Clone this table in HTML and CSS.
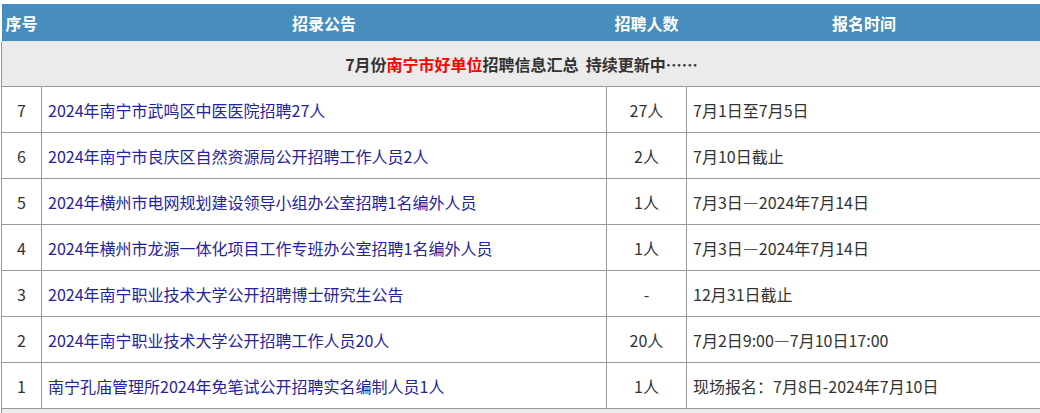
FILE: index.html
```html
<!DOCTYPE html>
<html lang="zh-CN">
<head>
<meta charset="utf-8">
<title>招聘信息汇总</title>
<link rel="stylesheet" href="styles.css">
</head>
<body>
<table class="jobs">
  <colgroup>
    <col class="c-no">
    <col class="c-title">
    <col class="c-count">
    <col class="c-time">
  </colgroup>
  <thead>
    <tr class="head">
      <th>序号</th>
      <th>招录公告</th>
      <th>招聘人数</th>
      <th>报名时间</th>
    </tr>
  </thead>
  <tbody>
    <tr class="group">
      <td colspan="4">7月份<span class="red">南宁市好单位</span>招聘信息汇总&nbsp; 持续更新中……</td>
    </tr>
    <tr>
      <td class="no">7</td>
      <td class="title"><a href="#">2024年南宁市武鸣区中医医院招聘27人</a></td>
      <td class="count">27人</td>
      <td class="time">7月1日至7月5日</td>
    </tr>
    <tr>
      <td class="no">6</td>
      <td class="title"><a href="#">2024年南宁市良庆区自然资源局公开招聘工作人员2人</a></td>
      <td class="count">2人</td>
      <td class="time">7月10日截止</td>
    </tr>
    <tr>
      <td class="no">5</td>
      <td class="title"><a href="#">2024年横州市电网规划建设领导小组办公室招聘1名编外人员</a></td>
      <td class="count">1人</td>
      <td class="time">7月3日—2024年7月14日</td>
    </tr>
    <tr>
      <td class="no">4</td>
      <td class="title"><a href="#">2024年横州市龙源一体化项目工作专班办公室招聘1名编外人员</a></td>
      <td class="count">1人</td>
      <td class="time">7月3日—2024年7月14日</td>
    </tr>
    <tr>
      <td class="no">3</td>
      <td class="title"><a href="#">2024年南宁职业技术大学公开招聘博士研究生公告</a></td>
      <td class="count">-</td>
      <td class="time">12月31日截止</td>
    </tr>
    <tr>
      <td class="no">2</td>
      <td class="title"><a href="#">2024年南宁职业技术大学公开招聘工作人员20人</a></td>
      <td class="count">20人</td>
      <td class="time">7月2日9:00—7月10日17:00</td>
    </tr>
    <tr>
      <td class="no">1</td>
      <td class="title"><a href="#">南宁孔庙管理所2024年免笔试公开招聘实名编制人员1人</a></td>
      <td class="count">1人</td>
      <td class="time">现场报名：7月8日-2024年7月10日</td>
    </tr>
    <tr class="group">
      <td colspan="4">&nbsp;</td>
    </tr>
  </tbody>
</table>
</body>
</html>
```

FILE: styles.css
```css
html, body {
  margin: 0;
  padding: 0;
  background: #ffffff;
  overflow: hidden;
}

body {
  font-family: "Noto Sans CJK SC", "Noto Sans", sans-serif;
  font-size: 16px;
  color: #333333;
}

.jobs {
  margin: 4px 0 0 1px;
  width: 1040px;
  border-collapse: collapse;
  table-layout: fixed;
}

.c-no { width: 40px; }
.c-title { width: 565px; }
.c-count { width: 80px; }
.c-time { width: 355px; }

.head th {
  background: #478dbe;
  color: #ffffff;
  font-weight: bold;
  height: 37px;
  padding: 0;
  line-height: 20px;
  text-align: center;
  vertical-align: middle;
  border-bottom: 1px solid #d9e6ee;
}

.head th:first-child {
  text-align: left;
  padding-left: 4px;
}

.jobs td {
  border: 1px solid #999999;
  height: 45px;
  padding: 0 6px;
  line-height: 20px;
  vertical-align: middle;
  white-space: nowrap;
  overflow: hidden;
}

.group td {
  background: #ebebeb;
  text-align: center;
  font-weight: bold;
  height: 44px;
  color: #333333;
  border-top: none;
}

.red {
  color: #ff0000;
}

.jobs td.no,
.jobs td.count {
  text-align: center;
  padding: 0;
}

.title a {
  color: #24249e;
  text-decoration: none;
}
```
